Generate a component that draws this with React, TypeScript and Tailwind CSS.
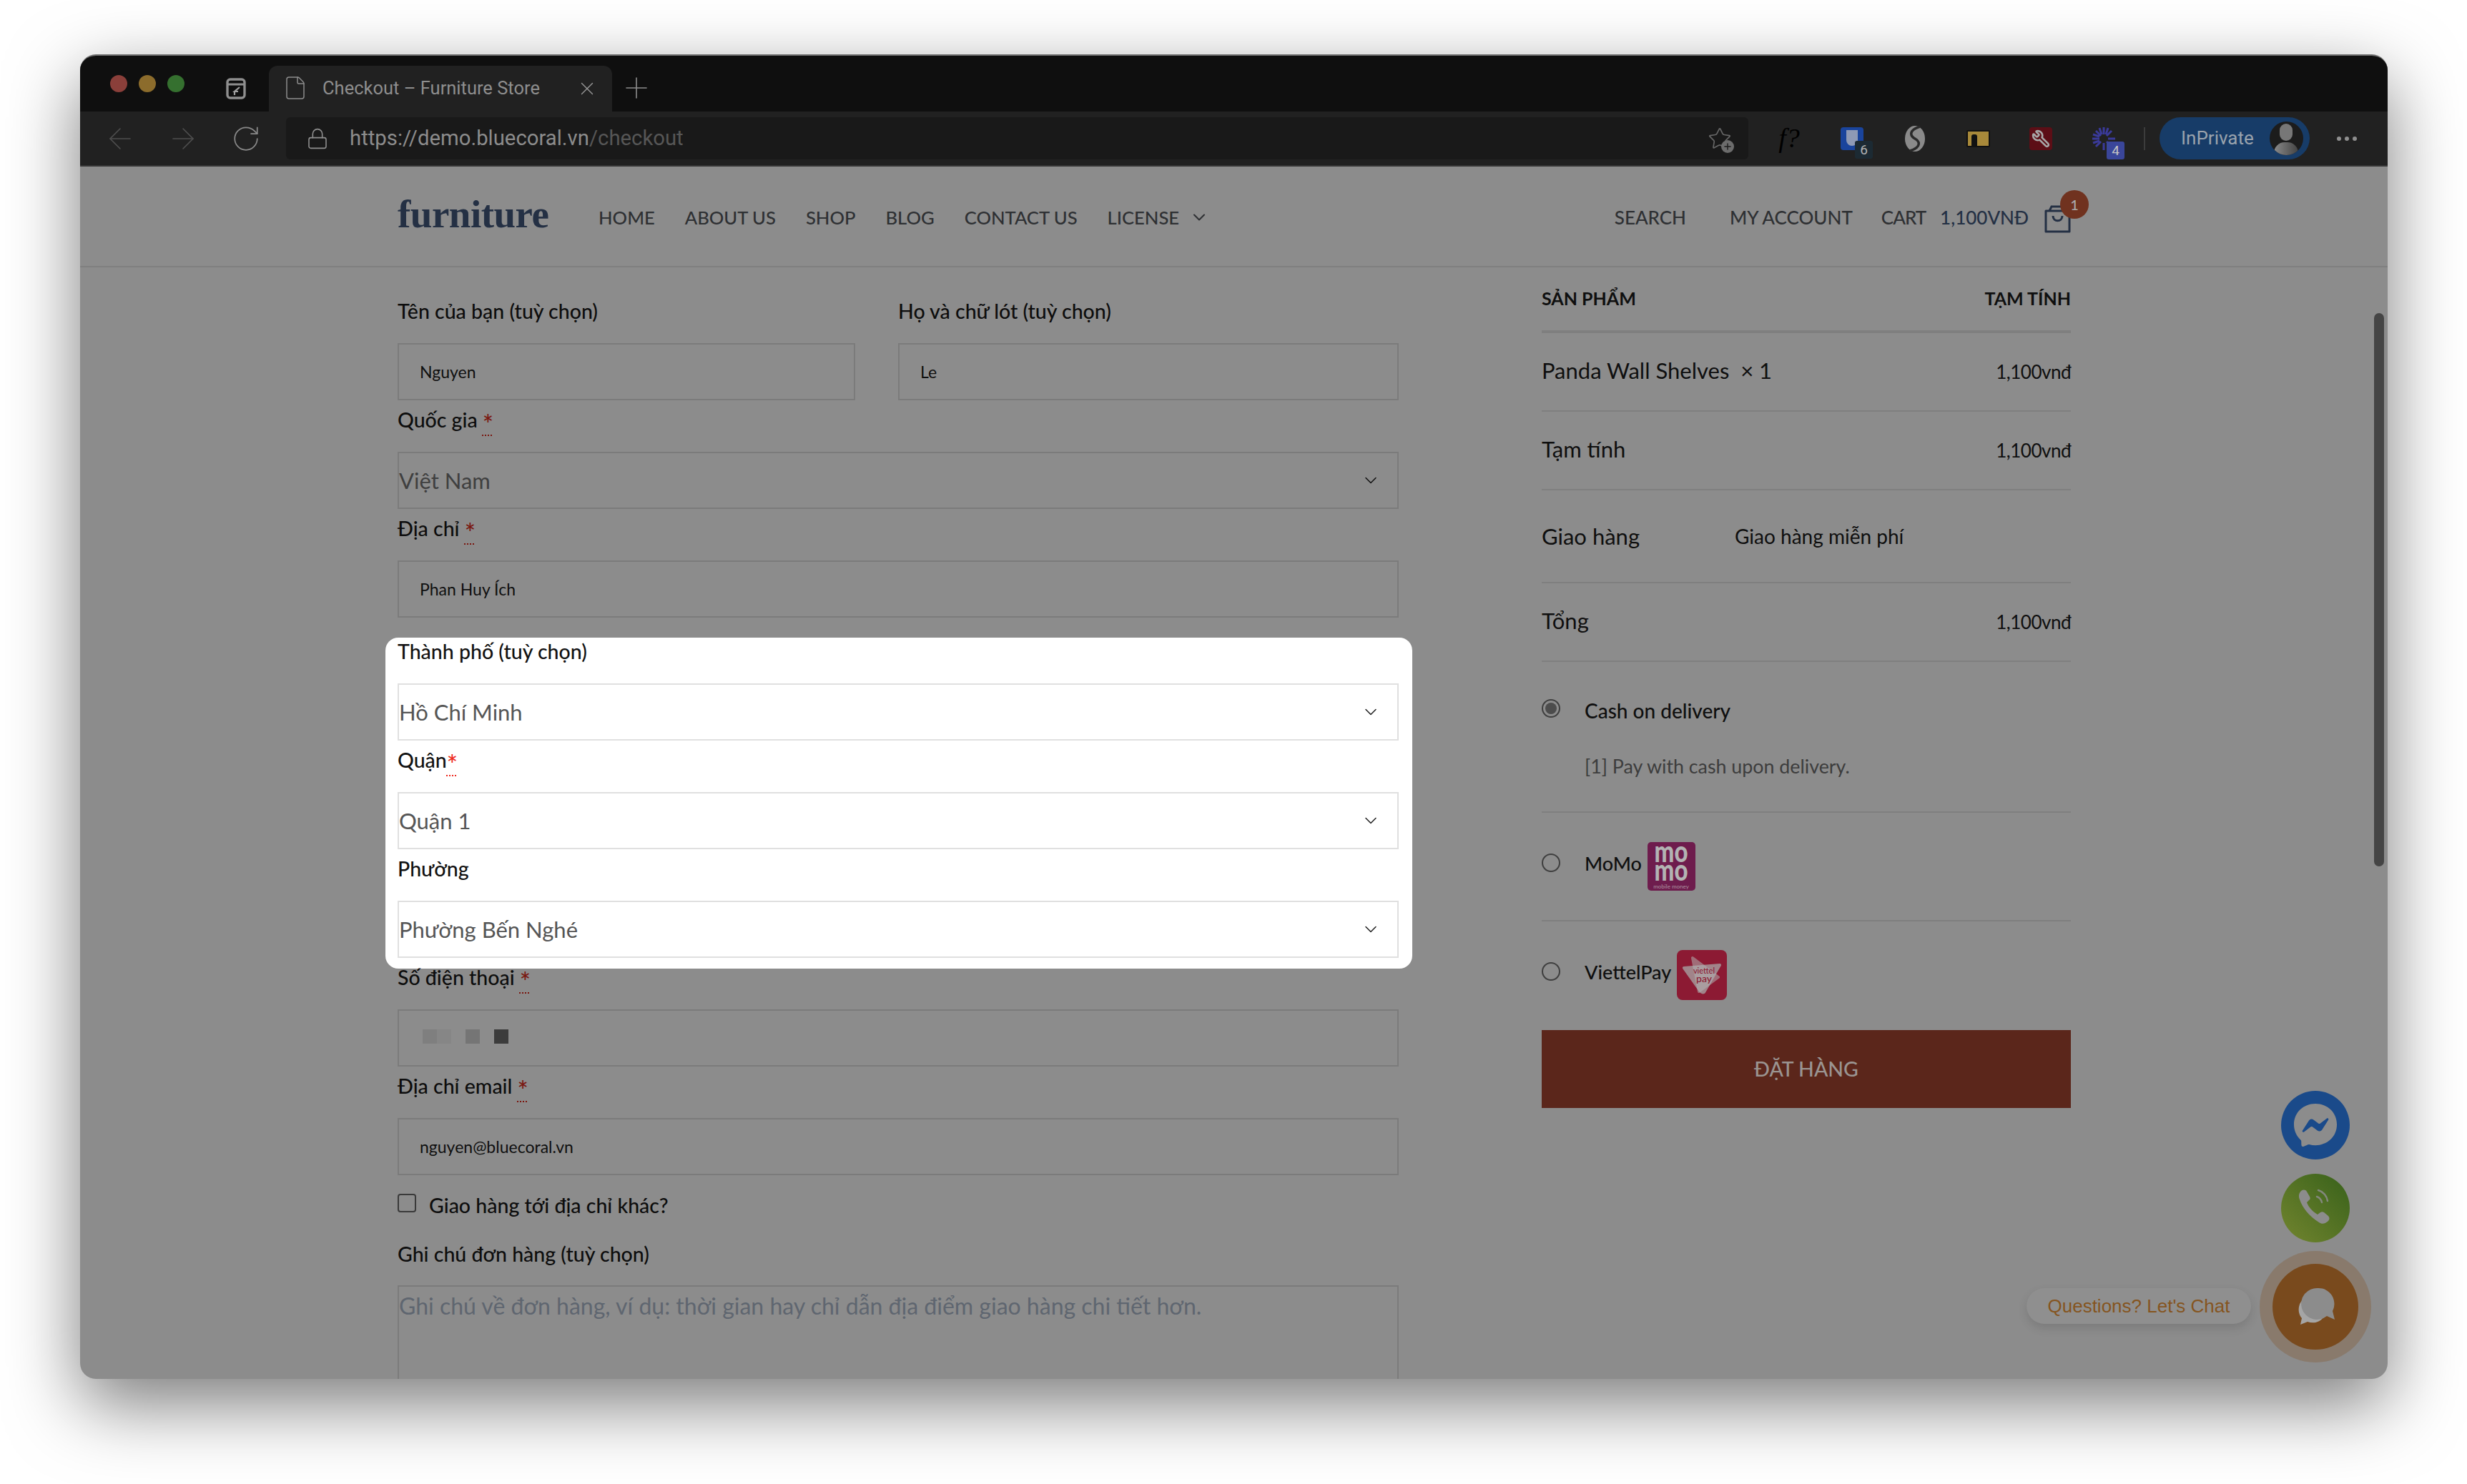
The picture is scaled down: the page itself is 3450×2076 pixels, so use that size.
import React from "react";
import { ArrowLeft, ArrowRight, RotateCw, File, X, Plus, Lock, ChevronDown, Star, Wrench } from "lucide-react";
import { FaFacebookMessenger } from "react-icons/fa";

const Req = ({ dim = true, spaced = true }: { dim?: boolean; spaced?: boolean }) => (
  <span className={`text-[36px] leading-none relative top-[6px] ${dim ? "text-[#7a1710]" : "text-[#ee2a20]"}`}>
    <span className="text-[28px]">{spaced ? " " : ""}</span>
    <span className="underline decoration-dotted decoration-2 underline-offset-[1px]">*</span>
  </span>
);

function Label({ children, light }: { children: React.ReactNode; light?: boolean }) {
  return (
    <div className={`h-[58px] mb-[14px] pb-[4px] flex items-center text-[28.5px] font-medium whitespace-pre ${light ? "text-[#111]" : "text-[#0d0d0d]"}`}>
      {children}
    </div>
  );
}

function TextBox({ value }: { value: React.ReactNode }) {
  return (
    <div className="h-[80px] border-2 border-[#7b7b7b] pl-[29px] flex items-center text-[23px] text-[#0f0f0f]">
      {value}
    </div>
  );
}

function SelectBox({ value, light }: { value: string; light?: boolean }) {
  return (
    <div className={`h-[80px] border-2 flex items-center justify-between pr-[23px] text-[31px] ${light ? "border-[#e0e0e0] text-[#555]" : "border-[#7b7b7b] text-[#3f3f3f]"}`}>
      <span>{value}</span>
      <ChevronDown size={28} strokeWidth={1.3} className={light ? "text-[#222]" : "text-[#111]"} />
    </div>
  );
}

function Row({ h, left, right, leftClass = "" }: { h: string; left: React.ReactNode; right?: React.ReactNode; leftClass?: string }) {
  return (
    <div className={`${h} border-b-2 border-[#7f7f7f] flex items-center justify-between text-[#0f0f0f]`}>
      <span className={`text-[31px] relative -top-[2px] ${leftClass}`}>{left}</span>
      {right && <span className="text-[26px] tracking-[-0.5px]">{right}</span>}
    </div>
  );
}

function Radio({ checked }: { checked?: boolean }) {
  return (
    <span className="w-[26px] h-[26px] rounded-full border-2 border-[#3f3f3f] flex items-center justify-center shrink-0">
      {checked && <span className="w-[16px] h-[16px] rounded-full bg-[#4c4c4c]" />}
    </span>
  );
}

const NAV = ["HOME", "ABOUT US", "SHOP", "BLOG", "CONTACT US"];

export default function App() {
  return (
    <div className="w-[3450px] h-[2076px] bg-white pl-[112px] pt-[76px] overflow-hidden font-['Lato','Noto_Sans',sans-serif]">
      <div className="relative w-[3227px] h-[1853px] rounded-[22px] overflow-hidden border-t-2 border-[#6e6e6e] bg-[#8c8c8c] shadow-[0_35px_100px_rgba(0,0,0,0.52)] flex flex-col">
        {/* tab strip */}
        <div className="h-[78px] bg-[#0f0f0f] flex items-end shrink-0">
          <div className="h-[78px] flex items-center gap-[16px] pl-[42px] w-[264px] shrink-0">
            <span className="w-[24px] h-[24px] rounded-full bg-[#8a3f3a]" />
            <span className="w-[24px] h-[24px] rounded-full bg-[#8c6c2c]" />
            <span className="w-[24px] h-[24px] rounded-full bg-[#35702f]" />
            <svg width="28" height="30" viewBox="0 0 28 30" className="ml-[42px] mt-[14px] shrink-0" fill="none">
              <rect x="2" y="2" width="24" height="26" rx="4" stroke="#8f8f8f" strokeWidth="3.4" />
              <path d="M2 9h24" stroke="#8f8f8f" strokeWidth="3" />
              <path d="M19 13l-7 6h5M12 19v5" stroke="#a0a0a0" strokeWidth="2.2" />
            </svg>
          </div>
          <div className="h-[64px] w-[480px] bg-[#212121] rounded-t-[12px] flex items-center pl-[22px] text-[#8e8e8e] font-['Roboto',sans-serif] shrink-0">
            <File size={36} strokeWidth={1} className="text-[#8d8d8d] -mt-[2px] -ml-[3px] shrink-0" />
            <span className="ml-[20px] text-[25.5px] whitespace-nowrap w-[355px] -mt-[2px] shrink-0">Checkout – Furniture Store</span>
            <X size={30} strokeWidth={1.1} className="text-[#9a9a9a] shrink-0" />
          </div>
          <Plus size={48} strokeWidth={0.8} className="text-[#8d8d8d] ml-[10px] mb-[9px] shrink-0" />
        </div>
        {/* toolbar */}
        <div className="h-[77px] bg-[#212121] border-b-2 border-[#363636] flex items-center shrink-0">
          <div className="w-[288px] pl-[32px] flex items-center gap-[40px] text-[#4f4f4f] shrink-0">
            <ArrowLeft size={48} strokeWidth={0.8} />
            <ArrowRight size={48} strokeWidth={0.8} />
            <RotateCw size={42} strokeWidth={1} className="text-[#8a8a8a] ml-[3px]" />
          </div>
          <div className="w-[2045px] h-[59px] bg-[#191919] rounded-[6px] flex items-center pl-[28px] pr-[22px] font-['Roboto',sans-serif] shrink-0">
            <Lock size={32} strokeWidth={1.2} className="text-[#8f8f8f] shrink-0" />
            <span className="ml-[29px] text-[29.3px] text-[#8c8c8c] whitespace-nowrap flex-1">
              https://demo.bluecoral.vn<span className="text-[#565656]">/checkout</span>
            </span>
            <span className="relative w-[36px] h-[36px] flex items-center justify-center">
              <Star size={34} strokeWidth={1.2} className="text-[#666]" />
              <span className="absolute -right-[2px] -bottom-[2px] w-[18px] h-[18px] rounded-full bg-[#6c6c6c] flex items-center justify-center">
                <Plus size={14} strokeWidth={2.5} className="text-[#1d1d1d]" />
              </span>
            </span>
          </div>
          {/* extensions */}
          <div className="flex items-center shrink-0">
            <span className="w-[114px] text-center text-[38px] italic font-['Liberation_Serif',serif] text-black shrink-0">f?</span>
            <span className="relative w-[32px] h-[32px] ml-[15px] bg-[#1a449c] rounded-[4px] flex justify-center shrink-0">
              <span className="w-[16px] h-[22px] mt-[4px] bg-[#8f9ab5] rounded-b-[9px]" />
              <span className="absolute left-[20px] top-[19px] w-[25px] h-[25px] rounded-[3px] bg-[#1c2a33] text-[#b3b3b3] text-[19px] leading-[25px] text-center font-['Roboto',sans-serif]">6</span>
            </span>
            <svg width="30" height="36" viewBox="0 0 30 36" className="ml-[57px] shrink-0">
              <ellipse cx="15" cy="18" rx="14" ry="18" fill="#8a8a8a" />
              <path d="M22 1C6 6 8 14 15 18C22 22 24 30 8 35" stroke="#2a2a2a" strokeWidth="3.5" fill="none" />
            </svg>
            <span className="ml-[57px] w-[33px] h-[24px] bg-[#a8893a] border-2 border-[#111] rounded-[2px] flex items-end pl-[5px] shrink-0">
              <span className="w-[8px] h-[16px] bg-[#111] rounded-t-[3px]" />
            </span>
            <span className="ml-[55px] w-[32px] h-[32px] bg-[#5c0e16] rounded-[4px] flex items-center justify-center shrink-0">
              <Wrench size={26} strokeWidth={2.4} className="text-[#a8a8a8] -scale-x-100" />
            </span>
            <span className="relative ml-[56px] w-[32px] h-[32px] shrink-0">
              <svg width="32" height="32" viewBox="0 0 32 32" stroke="#3a3a9a" strokeWidth="3">
                <path d="M16 0v10M16 22v10M0 16h10M22 16h10M5 5l7 7M20 20l7 7M27 5l-7 7M12 20l-7 7M10 1l3 9M22 1l-3 9M1 10l9 3M1 22l9-3" />
              </svg>
              <span className="absolute left-[20px] top-[20px] w-[25px] h-[25px] rounded-[3px] bg-[#3a469a] text-[#c4c4c4] text-[19px] leading-[25px] text-center font-['Roboto',sans-serif]">4</span>
            </span>
            <span className="ml-[40px] w-[2px] h-[32px] bg-[#3c3c3c] shrink-0" />
            <div className="ml-[20px] w-[210px] h-[59px] rounded-full bg-[#173c68] flex items-center pl-[30px] shrink-0">
              <span className="text-[26px] text-[#9aa3ad] font-['Roboto',sans-serif] w-[124px] shrink-0">InPrivate</span>
              <span className="w-[47px] h-[47px] rounded-full bg-[#1c1c1c] relative overflow-hidden shrink-0">
                <span className="absolute left-[14px] top-[3px] w-[18px] h-[24px] rounded-full bg-[#777]" />
                <span className="absolute left-[6px] top-[29px] w-[34px] h-[30px] rounded-full bg-gradient-to-r from-[#8a8a8a] to-[#444]" />
              </span>
            </div>
            <span className="ml-[38px] flex gap-[5px] shrink-0">
              <span className="w-[6px] h-[6px] rounded-full bg-[#8f8f8f]" />
              <span className="w-[6px] h-[6px] rounded-full bg-[#8f8f8f]" />
              <span className="w-[6px] h-[6px] rounded-full bg-[#8f8f8f]" />
            </span>
          </div>
        </div>
        {/* site header */}
        <header className="h-[141px] border-b-2 border-[#7f7f7f] flex items-center pl-[444px] pr-[443px] shrink-0 text-[#2e3033]">
          <span className="font-['Liberation_Serif',serif] font-bold text-[55px] leading-none tracking-[-0.5px] text-[#243044] -mt-[6px] w-[281px] shrink-0">furniture</span>
          <nav className="flex items-center gap-[42px] text-[25.6px] font-medium mt-[3px]">
            {NAV.map((n) => (
              <span key={n}>{n}</span>
            ))}
            <span className="flex items-center gap-[14px]">
              LICENSE
              <ChevronDown size={28} strokeWidth={1.8} />
            </span>
          </nav>
          <div className="ml-auto flex items-center text-[26px] font-medium mt-[3px]">
            <span>SEARCH</span>
            <span className="ml-[61px]">MY ACCOUNT</span>
            <span className="ml-[40px] tracking-[-1px]">CART</span>
            <span className="ml-[20px] text-[#243044]">1,100VNĐ</span>
            <span className="relative ml-[22px] w-[37px] h-[40px] mt-[3px]">
              <svg width="37" height="40" viewBox="0 0 37 40" fill="none" stroke="#243044" strokeWidth="3">
                <path d="M2 9h33v29H2z" strokeLinejoin="round" />
                <path d="M7 9l3-6h17l3 6" />
                <path d="M12 16c0 9 13 9 13 0" />
              </svg>
              <span className="absolute -right-[25px] -top-[20px] w-[40px] h-[40px] rounded-full bg-[#70321f] text-[#a9a9a9] text-[20px] flex items-center justify-center">1</span>
            </span>
          </div>
        </header>
        {/* main */}
        <main className="flex-1 min-h-0 overflow-hidden flex gap-[200px] pl-[444px]">
          <section className="w-[1400px] shrink-0 pt-[34px]">
            <div className="flex gap-[60px]">
              <div className="w-[640px] shrink-0">
                <Label>Tên của bạn (tuỳ chọn)</Label>
                <TextBox value="Nguyen" />
              </div>
              <div className="flex-1">
                <Label>Họ và chữ lót (tuỳ chọn)</Label>
                <TextBox value="Le" />
              </div>
            </div>
            <Label>Quốc gia<Req /></Label>
            <SelectBox value="Việt Nam" />
            <Label>Địa chỉ<Req /></Label>
            <TextBox value="Phan Huy Ích" />
            {/* highlighted block */}
            <div className="mt-[28px] -ml-[17px] -mr-[19px] pl-[17px] pr-[19px] pb-[15px] bg-white rounded-[18px]">
              <div className="h-[42px] mb-[22px] pb-[4px] flex items-center text-[28.5px] font-medium text-[#111]">Thành phố (tuỳ chọn)</div>
              <SelectBox light value="Hồ Chí Minh" />
              <Label light>Quận<Req dim={false} spaced={false} /></Label>
              <SelectBox light value="Quận 1" />
              <Label light>Phường</Label>
              <SelectBox light value="Phường Bến Nghé" />
            </div>
            <div className="h-[28px] mb-[29px] pb-[4px] flex items-center text-[28.5px] font-medium text-[#0d0d0d] whitespace-pre">Số điện thoại<Req /></div>
            <div className="h-[80px] border-2 border-[#7b7b7b] pl-[33px] pb-[4px] flex items-center">
              <span className="w-[20px] h-[20px] bg-[#7f7f7f]" />
              <span className="w-[20px] h-[20px] bg-[#868686]" />
              <span className="w-[20px] h-[20px] bg-[#757575] ml-[20px]" />
              <span className="w-[20px] h-[20px] bg-[#3c3c3c] ml-[20px]" />
            </div>
            <Label>Địa chỉ email<Req /></Label>
            <TextBox value="nguyen@bluecoral.vn" />
            <div className="mt-[26px] flex items-center h-[26px]">
              <span className="w-[26px] h-[26px] rounded-[4px] border-2 border-[#3a3a3a]" />
              <span className="ml-[18px] text-[28.5px] font-medium text-[#0d0d0d] relative top-[3px]">Giao hàng tới địa chỉ khác?</span>
            </div>
            <div className="mt-[31px] h-[58px] mb-[13px] pb-[4px] flex items-center text-[28.5px] font-medium text-[#0d0d0d]">Ghi chú đơn hàng (tuỳ chọn)</div>
            <div className="h-[220px] border-2 border-[#7b7b7b] text-[32px] text-[#5f6670] pt-[3px]">Ghi chú về đơn hàng, ví dụ: thời gian hay chỉ dẫn địa điểm giao hàng chi tiết hơn.</div>
          </section>
          <aside className="w-[740px] shrink-0">
            <div className="h-[92px] border-b-4 border-[#7f7f7f] flex items-center justify-between text-[25px] font-bold text-[#0f0f0f]">
              <span>SẢN PHẨM</span>
              <span>TẠM TÍNH</span>
            </div>
            <Row h="h-[110px]" left="Panda Wall Shelves  × 1" leftClass="whitespace-pre" right="1,100vnđ" />
            <Row h="h-[110px]" left="Tạm tính" right="1,100vnđ" />
            <div className="h-[130px] border-b-2 border-[#7f7f7f] flex items-center text-[#0f0f0f]">
              <span className="text-[31px] w-[270px] shrink-0">Giao hàng</span>
              <span className="text-[28px]">Giao hàng miễn phí</span>
            </div>
            <Row h="h-[110px]" left="Tổng" right="1,100vnđ" />
            <div className="pt-[37px] flex items-center h-[93px] text-[28px] font-medium text-[#0f0f0f]">
              <Radio checked />
              <span className="ml-[34px] relative top-[3px]">Cash on delivery</span>
            </div>
            <div className="h-[118px] border-b-2 border-[#7f7f7f] pl-[60px] pt-[33px] text-[26.8px] text-[#3d3d3d]">[1] Pay with cash upon delivery.</div>
            <div className="h-[152px] border-b-2 border-[#7f7f7f] flex items-start text-[27px] font-medium text-[#0f0f0f]">
              <span className="mt-[57px]"><Radio /></span>
              <span className="ml-[34px] mt-[51px]">MoMo</span>
              <svg width="67" height="68" viewBox="0 0 67 68" className="ml-[8px] mt-[41px] shrink-0">
                <rect width="67" height="68" rx="5" fill="#6e1c4d" />
                <g transform="scale(1 1.25)">
                  <text textAnchor="middle" fontSize="33" fontWeight="900" fill="#b3b3b3" fontFamily="Lato">
                    <tspan x="33" y="22.4">mo</tspan>
                    <tspan x="33" dy="20.6">mo</tspan>
                  </text>
                </g>
                <text x="33" y="65" textAnchor="middle" fontSize="8" fill="#a88a9c" fontFamily="Lato">mobile money</text>
              </svg>
            </div>
            <div className="h-[152px] flex items-start text-[27px] font-medium text-[#0f0f0f]">
              <span className="mt-[57px]"><Radio /></span>
              <span className="ml-[34px] mt-[51px]">ViettelPay</span>
              <svg width="70" height="70" viewBox="0 0 70 70" className="ml-[8px] mt-[40px] shrink-0">
                <rect width="70" height="70" rx="8" fill="#8c1a33" />
                <path d="M10 25L60 21L38 59C36 60 34 59 32 56Z" fill="#a8a8a8" stroke="#a8a8a8" strokeWidth="4" strokeLinejoin="round" opacity="0.75" />
                <path d="M22 11L58 38L31 58Z" fill="#b2b2b2" stroke="#b2b2b2" strokeWidth="4" strokeLinejoin="round" opacity="0.55" />
                <text x="38" y="33" textAnchor="middle" fontSize="11" fill="#8c1a33" fontFamily="Lato">viettel</text>
                <text x="38" y="45" textAnchor="middle" fontSize="14" fill="#8c1a33" fontFamily="Lato">pay</text>
              </svg>
            </div>
            <div className="h-[109px] bg-[#5b261b] flex items-center justify-center text-[28.5px] font-medium text-[#9a9491]">ĐẶT HÀNG</div>
          </aside>
        </main>
        {/* scrollbar */}
        <div className="absolute right-[5px] top-[360px] w-[14px] h-[774px] rounded-full bg-[#454545]" />
        {/* floating */}
        <div className="absolute right-[53px] bottom-[307px] w-[96px] h-[96px] rounded-full bg-[#1a4a8a] flex items-center justify-center">
          <FaFacebookMessenger size={62} className="text-[#8c8c8c]" />
        </div>
        <div className="absolute right-[53px] bottom-[191px] w-[96px] h-[96px] rounded-full bg-gradient-to-tr from-[#72852f] to-[#37611a] flex items-center justify-center">
          <svg width="60" height="60" viewBox="0 0 60 60" fill="#8c8c8c">
            <path d="M10 6c3-2 6-2 8 1l4 7c1 2 1 4-1 5l-3 3c2 6 8 13 15 17l4-3c2-1 3-1 5 0l6 5c2 2 2 5 0 7-4 4-9 5-13 2C22 42 12 30 8 18 6 13 7 9 10 6z" />
            <path d="M32 14c3 1 6 4 7 8M34 5c7 2 12 8 13 15" fill="none" stroke="#8c8c8c" strokeWidth="2.5" strokeLinecap="round" opacity="0.85" />
          </svg>
        </div>
        <div className="absolute right-[23px] bottom-[23px] w-[156px] h-[156px] rounded-full bg-[#897a6c] flex items-center justify-center">
          <div className="w-[120px] h-[120px] rounded-full bg-[#794a1d] flex items-center justify-center">
            <svg width="60" height="60" viewBox="0 0 60 60" fill="#8c8c8c">
              <path d="M14 19C6 24 4 38 11 46L9 55l10-4c8 3 17 1 22-6C26 47 13 36 14 19z" fill="#a5a5a5" />
              <path d="M34 4a22 22 0 0 1 20 32l3 12-11-5A22 22 0 1 1 34 4z" />
            </svg>
          </div>
        </div>
        <div className="absolute right-[191px] bottom-[77px] w-[314px] h-[50px] rounded-full bg-[#8f8f8f] shadow-[0_6px_14px_rgba(0,0,0,0.12)] flex items-center justify-center text-[26px] text-[#85551f] font-['Liberation_Sans',sans-serif]">
          Questions? Let's Chat
        </div>
      </div>
    </div>
  );
}
